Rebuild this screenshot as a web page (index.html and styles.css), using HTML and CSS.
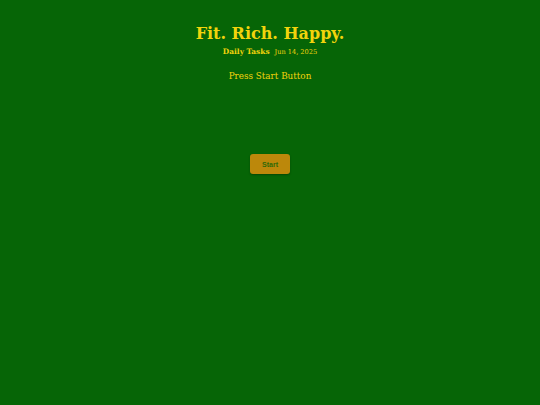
FILE: index.html
```html
<!DOCTYPE html>
<html>
<head>
<meta charset="utf-8">
<link rel="stylesheet" href="styles.css">
</head>
<body>
<div class="app">
  <header class="header">
    <h1 class="title">Fit. Rich. Happy.</h1>
    <div class="sub">
      <span class="sub-label">Daily Tasks</span>
      <span class="sub-date">Jun 14, 2025</span>
    </div>
    <p class="prompt">Press Start Button</p>
  </header>
  <button class="start">Start</button>
</div>
</body>
</html>
```

FILE: styles.css
```css
html, body {
  margin: 0;
  padding: 0;
  background: #066506;
  height: 100%;
}
.app {
  display: flex;
  flex-direction: column;
  align-items: center;
  font-family: "DejaVu Serif", "Liberation Serif", serif;
  color: #f2d40c;
}
.header {
  display: flex;
  flex-direction: column;
  align-items: center;
  padding-top: 23px;
}
.title {
  margin: 0;
  font-size: 16px;
  font-weight: bold;
  line-height: 22px;
}
.sub {
  display: flex;
  align-items: baseline;
  gap: 5px;
  margin-top: 1px;
  line-height: 12px;
}
.sub-label {
  font-size: 7.4px;
  font-weight: bold;
}
.sub-date {
  font-size: 6.6px;
}
.prompt {
  margin: 11px 0 0;
  font-size: 8.8px;
  line-height: 14px;
}
.start {
  margin-top: 71px;
  width: 40px;
  height: 20px;
  border: none;
  border-radius: 3px;
  background: #bc880b;
  color: #2f6808;
  font-family: "Liberation Sans", Arial, sans-serif;
  font-size: 7px;
  font-weight: bold;
  box-shadow: 0 1px 2px rgba(0,0,0,0.3);
  padding: 0;
}
```
